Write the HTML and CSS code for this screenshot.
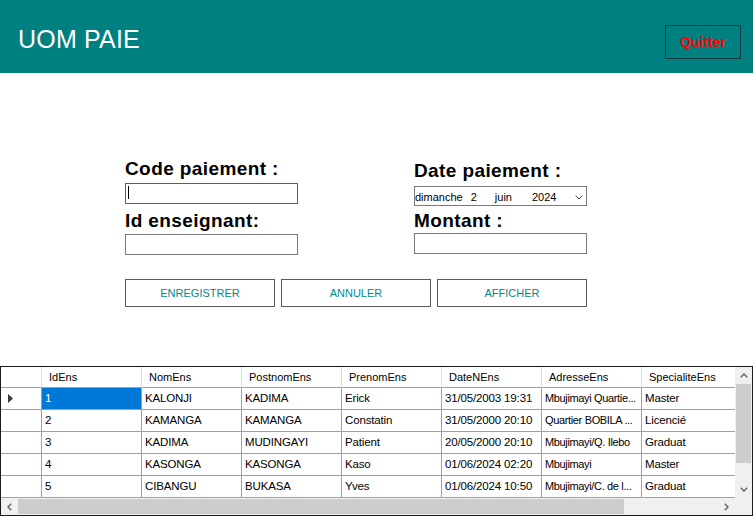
FILE: index.html
```html
<!DOCTYPE html>
<html lang="fr">
<head>
<meta charset="utf-8">
<title>UOM PAIE</title>
<link rel="stylesheet" href="styles.css">
</head>
<body>
<header class="topbar">
  <h1 class="title">UOM PAIE</h1>
  <button class="quit">Quitter</button>
</header>

<main class="form">
  <div class="fields">
    <div class="col">
      <label class="lbl">Code paiement :</label>
      <div class="box box-focus box-first"><span class="caret"></span></div>
      <label class="lbl lbl-second">Id enseignant:</label>
      <div class="box box-second-left"></div>
    </div>
    <div class="col col-right">
      <label class="lbl">Date paiement :</label>
      <div class="date">
        <span class="d-day">dimanche</span>
        <span class="d-num">2</span>
        <span class="d-month">juin</span>
        <span class="d-year">2024</span>
        <svg class="d-chev" width="8" height="5" viewBox="0 0 8 5"><polyline points="0.5,0.5 4,4 7.5,0.5" fill="none" stroke="#505050" stroke-width="1"/></svg>
      </div>
      <label class="lbl lbl-second">Montant :</label>
      <div class="box box-second-right"></div>
    </div>
  </div>
  <div class="buttons">
    <button class="btn">ENREGISTRER</button>
    <button class="btn">ANNULER</button>
    <button class="btn">AFFICHER</button>
  </div>
</main>

<section class="grid">
  <div class="grid-top">
    <div class="grid-main">
      <div class="row head">
        <div class="cell rowhead"></div>
        <div class="cell">IdEns</div>
        <div class="cell">NomEns</div>
        <div class="cell">PostnomEns</div>
        <div class="cell">PrenomEns</div>
        <div class="cell">DateNEns</div>
        <div class="cell">AdresseEns</div>
        <div class="cell">SpecialiteEns</div>
      </div>
      <div class="row">
        <div class="cell rowhead"><svg class="tri" width="6" height="9" viewBox="0 0 6 9"><polygon points="0,0 5,4.5 0,9" fill="#3a3a3a"/></svg></div>
        <div class="cell selected">1</div>
        <div class="cell">KALONJI</div>
        <div class="cell">KADIMA</div>
        <div class="cell">Erick</div>
        <div class="cell">31/05/2003 19:31</div>
        <div class="cell addr">Mbujimayi Quartie...</div>
        <div class="cell">Master</div>
      </div>
      <div class="row">
        <div class="cell rowhead"></div>
        <div class="cell">2</div>
        <div class="cell">KAMANGA</div>
        <div class="cell">KAMANGA</div>
        <div class="cell">Constatin</div>
        <div class="cell">31/05/2000 20:10</div>
        <div class="cell addr">Quartier BOBILA ...</div>
        <div class="cell">Licencié</div>
      </div>
      <div class="row">
        <div class="cell rowhead"></div>
        <div class="cell">3</div>
        <div class="cell">KADIMA</div>
        <div class="cell">MUDINGAYI</div>
        <div class="cell">Patient</div>
        <div class="cell">20/05/2000 20:10</div>
        <div class="cell addr">Mbujimayi/Q. Ilebo</div>
        <div class="cell">Graduat</div>
      </div>
      <div class="row">
        <div class="cell rowhead"></div>
        <div class="cell">4</div>
        <div class="cell">KASONGA</div>
        <div class="cell">KASONGA</div>
        <div class="cell">Kaso</div>
        <div class="cell">01/06/2024 02:20</div>
        <div class="cell addr">Mbujimayi</div>
        <div class="cell">Master</div>
      </div>
      <div class="row">
        <div class="cell rowhead"></div>
        <div class="cell">5</div>
        <div class="cell">CIBANGU</div>
        <div class="cell">BUKASA</div>
        <div class="cell">Yves</div>
        <div class="cell">01/06/2024 10:50</div>
        <div class="cell addr">Mbujimayi/C. de l...</div>
        <div class="cell">Graduat</div>
      </div>
    </div>
    <div class="vscroll">
      <div class="arrow"><svg width="8" height="5" viewBox="0 0 8 5"><polyline points="0.8,4.2 4,1 7.2,4.2" fill="none" stroke="#606060" stroke-width="1.4"/></svg></div>
      <div class="vthumb"></div>
      <div class="spacer"></div>
      <div class="arrow"><svg width="8" height="5" viewBox="0 0 8 5"><polyline points="0.8,0.8 4,4 7.2,0.8" fill="none" stroke="#606060" stroke-width="1.4"/></svg></div>
    </div>
  </div>
  <div class="hscroll-row">
    <div class="hscroll">
      <div class="arrow harrow"><svg width="5" height="8" viewBox="0 0 5 8"><polyline points="4.2,0.8 1,4 4.2,7.2" fill="none" stroke="#606060" stroke-width="1.4"/></svg></div>
      <div class="hthumb"></div>
      <div class="spacer"></div>
      <div class="arrow harrow"><svg width="5" height="8" viewBox="0 0 5 8"><polyline points="0.8,0.8 4,4 0.8,7.2" fill="none" stroke="#606060" stroke-width="1.4"/></svg></div>
    </div>
    <div class="corner"></div>
  </div>
</section>
</body>
</html>
```
FILE: styles.css
```css
* {
  box-sizing: border-box;
  margin: 0;
  padding: 0;
}

body {
  margin: 0;
  width: 753px;
  height: 516px;
  overflow: hidden;
  background: #ffffff;
  font-family: "Liberation Sans", Arial, sans-serif;
  color: #000;
}

/* Top bar */
.topbar {
  height: 73px;
  background: #008080;
  display: flex;
  justify-content: space-between;
  align-items: flex-start;
  padding: 25px 12px 0 18px;
}

.title {
  font-size: 25px;
  font-weight: normal;
  line-height: 25px;
  color: #ffffff;
  margin-top: 2px;
  letter-spacing: 0.2px;
}

.quit {
  width: 76px;
  height: 34px;
  border: 1px solid #163a3a;
  background: #008080;
  color: #ff0000;
  font: bold 14px "Liberation Sans", Arial, sans-serif;
}

/* Form */
.form {
  height: 293px;
  padding-top: 84px;
}

.fields {
  display: flex;
  gap: 116px;
  padding-left: 125px;
}

.col {
  width: 173px;
  display: flex;
  flex-direction: column;
}

.col-right {
  margin-top: 2px;
}

.lbl {
  display: block;
  height: 22px;
  font-size: 19px;
  font-weight: bold;
  line-height: 24px;
  letter-spacing: 0.4px;
  white-space: nowrap;
}

.lbl-second {
  margin-top: 5px;
}

.col-right .lbl-second {
  margin-top: 3px;
}

.box {
  height: 21px;
  border: 1px solid #7a7a7a;
  background: #fff;
}

.box-first {
  margin-top: 4px;
}

.box-second-left {
  margin-top: 3px;
}

.box-second-right {
  margin-top: 2px;
}

.box-focus {
  border-color: #0078d7;
  padding: 2px 0 0 2px;
}

.caret {
  display: block;
  width: 1px;
  height: 13px;
  background: #000;
}

.date {
  margin-top: 5px;
  height: 20px;
  border: 1px solid #7a7a7a;
  display: flex;
  align-items: center;
  font-size: 11px;
  line-height: 12px;
  white-space: nowrap;
  padding-top: 1px;
}

.d-day { margin-left: 0; }
.d-num { margin-left: 8px; }
.d-month { margin-left: 18px; }
.d-year { margin-left: 20px; }
.d-chev { margin-left: 19px; margin-top: 1px; }

.buttons {
  display: flex;
  gap: 6px;
  padding-left: 125px;
  margin-top: 24px;
}

.btn {
  width: 150px;
  height: 28px;
  border: 1px solid #5a5a5a;
  background: #ffffff;
  color: #008b8b;
  font: 11px "Liberation Sans", Arial, sans-serif;
}

/* Data grid */
.grid {
  width: 753px;
  height: 150px;
  border: 1px solid #1a1a1a;
  display: flex;
  flex-direction: column;
  font-size: 11.5px;
  letter-spacing: -0.15px;
}

.grid-top {
  display: flex;
  height: 131px;
}

.grid-main {
  width: 734px;
  overflow: hidden;
  background: #fff;
}

.row {
  display: flex;
}

.cell {
  flex: none;
  width: 100px;
  height: 22px;
  line-height: 21px;
  padding-left: 3px;
  border-right: 1px solid #a0a0a0;
  border-bottom: 1px solid #a0a0a0;
  white-space: nowrap;
  overflow: hidden;
}

.cell.addr {
  font-size: 11px;
  letter-spacing: -0.35px;
}

.cell.rowhead {
  width: 41px;
  padding-left: 7px;
  display: flex;
  align-items: center;
}

.head .cell {
  height: 21px;
  line-height: 20px;
  padding-left: 7px;
  font-size: 11px;
  letter-spacing: 0;
  border-right-color: #dcdcdc;
}

.tri {
  display: block;
}

.selected {
  background: #0078d7;
  color: #ffffff;
}

.vscroll {
  width: 17px;
  background: #f0f0f0;
  display: flex;
  flex-direction: column;
}

.arrow {
  flex: none;
  width: 17px;
  height: 17px;
  display: flex;
  align-items: center;
  justify-content: center;
}

.arrow svg {
  display: block;
}

.vthumb {
  flex: none;
  height: 79px;
  margin: 0 1px;
  background: #cdcdcd;
}

.spacer {
  flex: 1;
}

.hscroll-row {
  display: flex;
  height: 17px;
}

.hscroll {
  width: 734px;
  display: flex;
  background: #f0f0f0;
}

.hthumb {
  flex: none;
  width: 606px;
  margin: 1px 0;
  background: #cdcdcd;
}

.corner {
  width: 17px;
  background: #f0f0f0;
}
```
